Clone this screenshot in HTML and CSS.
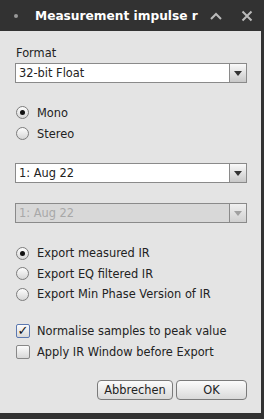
FILE: index.html
```html
<!DOCTYPE html>
<html lang="de">
<head>
    <meta charset="UTF-8">
    <title>Measurement impulse response</title>
    <link rel="stylesheet" href="styles.css">
</head>
<body>
    <div class="titlebar">
        <span class="dot"></span>
        <span class="title">Measurement impulse r</span>
        <svg class="tb-icon up" width="14" height="10" viewBox="0 0 14 10"><path d="M2 8 L7 3 L12 8" fill="none" stroke="#bbb" stroke-width="2"/></svg>
        <svg class="tb-icon close" width="12" height="12" viewBox="0 0 12 12"><path d="M1.5 1.5 L10.5 10.5 M10.5 1.5 L1.5 10.5" fill="none" stroke="#bbb" stroke-width="2"/></svg>
    </div>
    <div class="dialog">
        <div class="label">Format</div>
        <div class="combo">
            <span class="combo-text">32-bit Float</span>
            <span class="combo-btn"><span class="arrow"></span></span>
        </div>

        <div class="group first">
            <div class="row"><span class="radio checked"></span>Mono</div>
            <div class="row"><span class="radio"></span>Stereo</div>
        </div>

        <div class="combo combo-2">
            <span class="combo-text">1: Aug 22</span>
            <span class="combo-btn"><span class="arrow"></span></span>
        </div>
        <div class="combo combo-3 disabled">
            <span class="combo-text">1: Aug 22</span>
            <span class="combo-btn"><span class="arrow"></span></span>
        </div>

        <div class="group exports">
            <div class="row"><span class="radio checked"></span>Export measured IR</div>
            <div class="row"><span class="radio"></span>Export EQ filtered IR</div>
            <div class="row"><span class="radio"></span>Export Min Phase Version of IR</div>
        </div>

        <div class="group checks">
            <div class="row"><span class="check checked">&#10003;</span>Normalise samples to peak value</div>
            <div class="row"><span class="check"></span>Apply IR Window before Export</div>
        </div>

        <div class="buttons">
            <button class="btn cancel">Abbrechen</button>
            <button class="btn ok">OK</button>
        </div>
    </div>
</body>
</html>
```

FILE: styles.css
```css
body {
    margin: 0;
    padding: 0;
    width: 264px;
    height: 419px;
    background-color: #323232;
    font-family: "DejaVu Sans", sans-serif;
    font-size: 11.4px;
    color: #222;
    overflow: hidden;
}

.titlebar {
    height: 31px;
    display: flex;
    align-items: center;
}
.dot {
    width: 4px;
    height: 4px;
    border-radius: 50%;
    background-color: #999;
    margin-left: 14px;
}
.title {
    color: #fff;
    font-weight: bold;
    font-size: 12.2px;
    margin-left: 17px;
    white-space: nowrap;
}
.tb-icon.up { margin-left: 11px; }
.tb-icon.close { margin-left: 18px; }

.dialog {
    background-color: #e4e4e4;
    margin-right: 3px;
    height: 382px;
    padding: 15px 14px 0 15px;
    box-sizing: border-box;
}

.label {
    line-height: 14px;
    padding-left: 1px;
    margin-bottom: 3px;
}

.combo {
    height: 20px;
    border: 1px solid #8a8a8a;
    background-color: #fff;
    display: flex;
    box-sizing: border-box;
}
.combo-text {
    flex: 1;
    line-height: 18px;
    padding-left: 3px;
}
.combo-btn {
    width: 16px;
    border-left: 1px solid #8a8a8a;
    background: linear-gradient(#fafafa, #c8c8c8);
    display: flex;
    align-items: center;
    justify-content: center;
}
.arrow {
    width: 0;
    height: 0;
    border-left: 4px solid transparent;
    border-right: 4px solid transparent;
    border-top: 5px solid #333;
}
.combo-2 { margin-top: 19px; }
.combo-3 { margin-top: 20px; }
.combo.disabled { background-color: #d8d8d8; color: #a8a8a8; }
.combo.disabled .combo-btn { background: linear-gradient(#f0f0f0, #d0d0d0); }
.combo.disabled .arrow { border-top-color: #a0a0a0; }

.group.first { margin-top: 19px; }
.group.exports { margin-top: 20px; }
.group.checks { margin-top: 16px; }

.row {
    height: 21px;
    display: flex;
    align-items: center;
    padding-left: 1px;
}
.exports .row { height: 20.5px; }

.radio {
    width: 13px;
    height: 13px;
    border-radius: 50%;
    border: 1px solid #7c7c7c;
    background: linear-gradient(#fdfdfd, #d6d6d6);
    box-sizing: border-box;
    margin-right: 8px;
    position: relative;
}
.radio.checked::after {
    content: "";
    position: absolute;
    left: 3px;
    top: 3px;
    width: 5px;
    height: 5px;
    border-radius: 50%;
    background-color: #111;
}

.check {
    width: 14px;
    height: 14px;
    border: 1px solid #888;
    border-radius: 2px;
    background: linear-gradient(#fcfcfc, #d8d8d8);
    box-sizing: border-box;
    margin-right: 7px;
    font-size: 13px;
    font-weight: bold;
    line-height: 12px;
    text-align: center;
    color: #111;
}
.check.checked { border-color: #5b78b0; }

.buttons {
    display: flex;
    justify-content: flex-end;
    gap: 3px;
    margin-top: 17px;
}
.btn {
    height: 20px;
    border: 1px solid #7a7a7a;
    border-radius: 4px;
    background: linear-gradient(#fbfbfb, #d9d9d9);
    font-family: "DejaVu Sans", sans-serif;
    font-size: 11.4px;
    color: #222;
    padding: 0;
}
.btn.cancel { width: 76px; }
.btn.ok { width: 71px; }
```
